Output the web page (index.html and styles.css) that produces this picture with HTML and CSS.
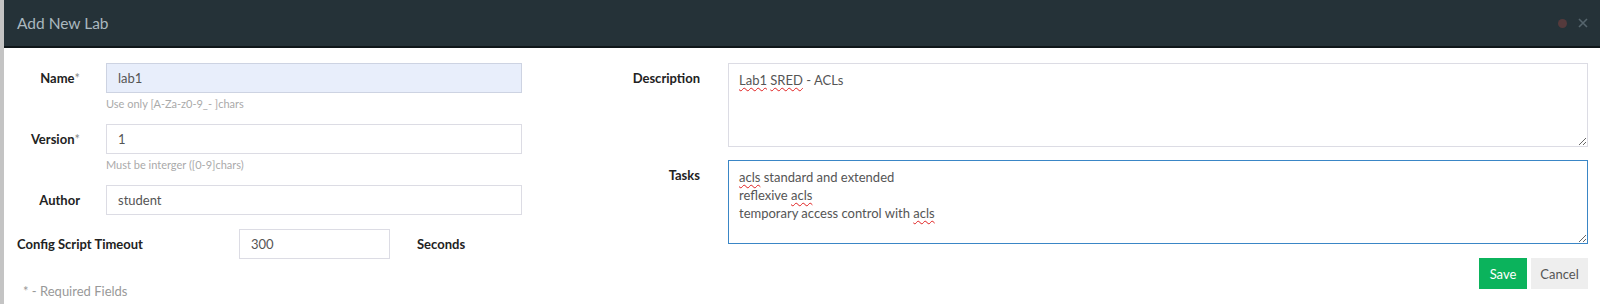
FILE: index.html
```html
<!DOCTYPE html>
<html lang="en">
<head>
  <meta charset="UTF-8" />
  <title>Add New Lab</title>
  <link rel="stylesheet" href="styles.css">
</head>
<body>

  <div class="modal">
    <div class="modal-header">
      <div class="modal-title">Add New Lab</div>
      <div class="header-tools">
        <span class="dot"></span>
        <svg class="close" width="10" height="10" viewBox="0 0 10 10">
          <path d="M1 1 L9 9 M9 1 L1 9" stroke="#56656d" stroke-width="1.6" />
        </svg>
      </div>
    </div>

    <div class="modal-body">
      <div class="col-left">
        <div class="field">
          <label class="label">Name<span class="req">*</span></label>
          <div class="control">
            <div class="input autofill">lab1</div>
            <div class="help">Use only [A-Za-z0-9_- ]chars</div>
          </div>
        </div>

        <div class="field">
          <label class="label">Version<span class="req">*</span></label>
          <div class="control">
            <div class="input">1</div>
            <div class="help">Must be interger ([0-9]chars)</div>
          </div>
        </div>

        <div class="field">
          <label class="label">Author</label>
          <div class="control">
            <div class="input">student</div>
          </div>
        </div>

        <div class="timeout-row">
          <label class="label timeout-label">Config Script Timeout</label>
          <div class="input timeout-input">300</div>
          <span class="label unit">Seconds</span>
        </div>

        <div class="required-note">* - Required Fields</div>
      </div>

      <div class="col-right">
        <div class="field-wide">
          <label class="label">Description</label>
          <div class="textarea"><span class="typo">Lab1</span> <span class="typo">SRED</span> - ACLs</div>
        </div>

        <div class="field-wide">
          <label class="label">Tasks</label>
          <div class="textarea focused"><span class="typo">acls</span> standard and extended<br>reflexive <span class="typo">acls</span><br>temporary access control with <span class="typo">acls</span></div>
        </div>

        <div class="actions">
          <button class="btn btn-save">Save</button>
          <button class="btn btn-cancel">Cancel</button>
        </div>
      </div>
    </div>
  </div>

</body>
</html>
```

FILE: styles.css
```css
body {
  margin: 0;
  padding: 0;
  background: #c4c4c4;
  font-family: 'Lato', 'Liberation Sans', sans-serif;
  font-size: 13px;
}

.modal {
  margin-left: 4px;
  min-height: 100vh;
  background: #fff;
}

.modal-header {
  height: 46px;
  background: #253238;
  border-bottom: 2px solid #0f1619;
  display: flex;
  justify-content: space-between;
  align-items: center;
  padding: 0 13px;
}

.modal-title {
  font-size: 15.5px;
  color: #aab8bf;
}

.header-tools {
  display: flex;
  align-items: center;
  gap: 11px;
  margin-right: -1px;
}

.dot {
  width: 9px;
  height: 9px;
  border-radius: 50%;
  background: #553a3c;
}

.modal-body {
  display: flex;
  gap: 38px;
  padding: 15px 12px 0 13px;
}

/* left column */
.col-left {
  width: 505px;
}

.label {
  font-weight: bold;
  color: #222;
  line-height: 30px;
}

.req {
  font-weight: normal;
  color: #888;
}

.field {
  display: grid;
  grid-template-columns: 63px 1fr;
  column-gap: 26px;
  margin-bottom: 14px;
}

.field .label {
  text-align: right;
}

.input {
  height: 28px;
  line-height: 28px;
  border: 1px solid #dcdce4;
  padding: 0 11px;
  color: #555;
}

.autofill {
  background: #e8eefb;
  border-color: #cdd3e2;
}

.help {
  font-size: 11px;
  color: #aaa;
  line-height: 15px;
  margin-top: 3px;
  margin-bottom: -1px;
}

.timeout-row {
  display: flex;
  align-items: center;
}

.timeout-label {
  width: 222px;
}

.timeout-input {
  width: 127px;
}

.unit {
  margin-left: 27px;
}

.required-note {
  margin-top: 25px;
  margin-left: 6px;
  color: #999;
  line-height: 15px;
}

/* right column */
.col-right {
  flex: 1;
}

.field-wide {
  display: grid;
  grid-template-columns: 140px 1fr;
  column-gap: 28px;
  margin-bottom: 13px;
}

.field-wide .label {
  text-align: right;
}

.textarea {
  height: 68px;
  border: 1px solid #dcdce4;
  padding: 7px 10px;
  color: #555;
  line-height: 18px;
  overflow: auto;
  resize: both;
}

.textarea.focused {
  border-color: #3a86c6;
}

.typo {
  text-decoration: underline wavy #e02020;
  text-decoration-thickness: 1px;
  text-underline-offset: 2px;
}

.actions {
  display: flex;
  justify-content: flex-end;
  gap: 4px;
  margin-top: 14px;
}

.btn {
  height: 31px;
  border: none;
  font-family: inherit;
  font-size: 13px;
  cursor: pointer;
}

.btn-save {
  width: 48px;
  background: #0bb35c;
  color: #fff;
}

.btn-cancel {
  width: 57px;
  background: #eee;
  color: #555;
}
```
